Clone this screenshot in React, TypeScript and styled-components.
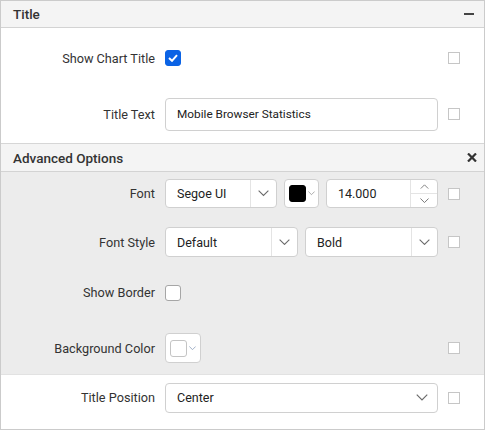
import React from "react";
import styled, { createGlobalStyle } from "styled-components";

const GlobalStyle = createGlobalStyle`
  html, body {
    margin: 0;
    padding: 0;
    background: #fff;
  }
  body {
    font-family: Roboto, "Liberation Sans", Arial, sans-serif;
    color: #333;
  }
`;

const Chevron = ({ size = 10, color = "#6b6b6b" }: { size?: number; color?: string }) => (
  <svg width={size} height={size / 2 + 1} viewBox="0 0 10 6" fill="none">
    <polyline points="0.5,0.5 5,5 9.5,0.5" stroke={color} strokeWidth="1" />
  </svg>
);

const App = () => {
  return (
    <>
      <GlobalStyle />
      <Panel>
        <SectionHeader>
          <HeaderTitle>Title</HeaderTitle>
          <MinusIcon />
        </SectionHeader>
        <Section>
          <Row $height={60}>
            <Label>Show Chart Title</Label>
            <Control>
              <Check $checked>
                <svg width="10" height="8" viewBox="0 0 10 8" fill="none">
                  <polyline points="1,4 4,6.8 9,1.2" stroke="#fff" strokeWidth="2" />
                </svg>
              </Check>
            </Control>
            <SmallBox />
          </Row>
          <Row $height={52}>
            <Label>Title Text</Label>
            <Control>
              <TextBox>Mobile Browser Statistics</TextBox>
            </Control>
            <SmallBox />
          </Row>
          <Spacer $h={3} />
        </Section>

        <SectionHeader $top>
          <HeaderTitle>Advanced Options</HeaderTitle>
          <CloseIcon viewBox="0 0 10 9" width="10" height="9">
            <path d="M1 0.5 L9 8.5 M9 0.5 L1 8.5" stroke="#333" strokeWidth="2.2" />
          </CloseIcon>
        </SectionHeader>
        <Section $gray>
          <Row $height={43}>
            <Label>Font</Label>
            <Control>
              <Select $width={112} $height={29} $arrow={25}>
                <SelectText>Segoe UI</SelectText>
                <ArrowCell>
                  <Chevron size={11} />
                </ArrowCell>
              </Select>
              <ColorPicker $width={35} $height={29}>
                <Swatch $color="#000" />
                <Chevron size={7} color="#8a8a8a" />
              </ColorPicker>
              <NumberBox>
                <SelectText>14.000</SelectText>
                <Spinner>
                  <SpinBtn>
                    <svg width="9" height="5" viewBox="0 0 10 6" fill="none">
                      <polyline points="0.5,5.5 5,1 9.5,5.5" stroke="#6b6b6b" strokeWidth="1" />
                    </svg>
                  </SpinBtn>
                  <SpinBtn>
                    <Chevron size={9} />
                  </SpinBtn>
                </Spinner>
              </NumberBox>
            </Control>
            <SmallBox />
          </Row>
          <Row $height={54}>
            <Label>Font Style</Label>
            <Control>
              <Select $width={133} $height={30} $arrow={25}>
                <SelectText>Default</SelectText>
                <ArrowCell>
                  <Chevron size={11} />
                </ArrowCell>
              </Select>
              <Select $width={133} $height={30} $arrow={25}>
                <SelectText>Bold</SelectText>
                <ArrowCell>
                  <Chevron size={11} />
                </ArrowCell>
              </Select>
            </Control>
            <SmallBox />
          </Row>
          <Row $height={47}>
            <Label>Show Border</Label>
            <Control>
              <Check />
            </Control>
            <span />
          </Row>
          <Row $height={58} $padTop={6}>
            <Label>Background Color</Label>
            <Control>
              <ColorPicker $width={36} $height={30}>
                <Swatch $color="#fff" />
                <Chevron size={7} color="#7a8fb0" />
              </ColorPicker>
            </Control>
            <SmallBox />
          </Row>
        </Section>
        <Section $topLine>
          <Row $height={45}>
            <Label>Title Position</Label>
            <Control>
              <Select $width={273} $height={30} $arrow={30}>
                <SelectText>Center</SelectText>
                <ArrowCell $plain>
                  <Chevron size={12} />
                </ArrowCell>
              </Select>
            </Control>
            <SmallBox />
          </Row>
          <Spacer $h={8} />
        </Section>
      </Panel>
    </>
  );
};

const Panel = styled.div`
  width: 483px;
  height: 428px;
  border: 1px solid #cbcbcb;
  background: #fff;
  overflow: hidden;
  font-size: 13px;
`;

const SectionHeader = styled.div<{ $top?: boolean }>`
  display: flex;
  align-items: center;
  justify-content: space-between;
  padding: 0 8px 0 12px;
  background: #f4f4f4;
  border-top: ${(p) => (p.$top ? "1px solid #d6d6d6" : "none")};
  border-bottom: 1px solid #d3d3d3;
  height: ${(p) => (p.$top ? "27px" : "26px")};
`;

const HeaderTitle = styled.span`
  font-size: 13.5px;
  font-weight: 500;
  color: #333;
`;

const MinusIcon = styled.span`
  display: block;
  width: 10px;
  height: 1.5px;
  background: #444;
  margin-right: 2px;
`;

const CloseIcon = styled.svg`
  display: block;
  margin-right: -1px;
`;

const Section = styled.div<{ $gray?: boolean; $topLine?: boolean }>`
  background: ${(p) => (p.$gray ? "#ececec" : "#fff")};
  border-top: ${(p) => (p.$topLine ? "1px solid #e2e2e2" : "none")};
`;

const Spacer = styled.div<{ $h: number }>`
  height: ${(p) => p.$h}px;
`;

const Row = styled.div<{ $height: number; $padTop?: number }>`
  box-sizing: border-box;
  height: ${(p) => p.$height}px;
  padding-top: ${(p) => p.$padTop ?? 0}px;
  display: grid;
  grid-template-columns: 154px 273px 12px;
  column-gap: 10px;
  align-items: center;
`;

const Label = styled.span`
  text-align: right;
  font-size: 12.7px;
  color: #333;
  white-space: nowrap;
`;

const Control = styled.div`
  display: flex;
  align-items: center;
  gap: 7px;
`;

const Check = styled.span<{ $checked?: boolean }>`
  width: 16px;
  height: 16px;
  box-sizing: border-box;
  border-radius: 3px;
  display: flex;
  align-items: center;
  justify-content: center;
  background: ${(p) => (p.$checked ? "#0b63e5" : "#fff")};
  border: 1px solid ${(p) => (p.$checked ? "#0b63e5" : "#a6a6a6")};
`;

const SmallBox = styled.span`
  width: 12px;
  height: 12px;
  box-sizing: border-box;
  border: 1px solid #c6c6c6;
  background: #fff;
`;

const Field = styled.div`
  box-sizing: border-box;
  background: #fff;
  border: 1px solid #d0d0d0;
  border-radius: 4px;
  display: flex;
  align-items: center;
`;

const TextBox = styled(Field)`
  width: 273px;
  height: 33px;
  padding-left: 11px;
  font-size: 11.8px;
  color: #222;
`;

const Select = styled(Field)<{ $width: number; $height: number; $arrow: number }>`
  width: ${(p) => p.$width}px;
  height: ${(p) => p.$height}px;
  justify-content: space-between;
  padding-left: 11px;
  & > div:last-child {
    width: ${(p) => p.$arrow}px;
  }
`;

const SelectText = styled.span`
  font-size: 12.5px;
  color: #222;
  flex: 1;
`;

const ArrowCell = styled.div<{ $plain?: boolean }>`
  align-self: stretch;
  display: flex;
  align-items: center;
  justify-content: center;
  border-left: ${(p) => (p.$plain ? "none" : "1px solid #e4e4e4")};
`;

const ColorPicker = styled(Field)<{ $width: number; $height: number }>`
  width: ${(p) => p.$width}px;
  height: ${(p) => p.$height}px;
  padding-left: 4px;
  gap: 2px;
`;

const Swatch = styled.span<{ $color: string }>`
  width: 17px;
  height: 17px;
  box-sizing: border-box;
  border-radius: 3px;
  background: ${(p) => p.$color};
  border: 1px solid ${(p) => (p.$color === "#000" ? "#000" : "#c4c4c4")};
`;

const NumberBox = styled(Field)`
  width: 112px;
  height: 29px;
  padding-left: 11px;
`;

const Spinner = styled.div`
  width: 26px;
  align-self: stretch;
  display: flex;
  flex-direction: column;
  border-left: 1px solid #e4e4e4;
`;

const SpinBtn = styled.div`
  flex: 1;
  display: flex;
  align-items: center;
  justify-content: center;
  & + & {
    border-top: 1px solid #e4e4e4;
  }
`;

export default App;
